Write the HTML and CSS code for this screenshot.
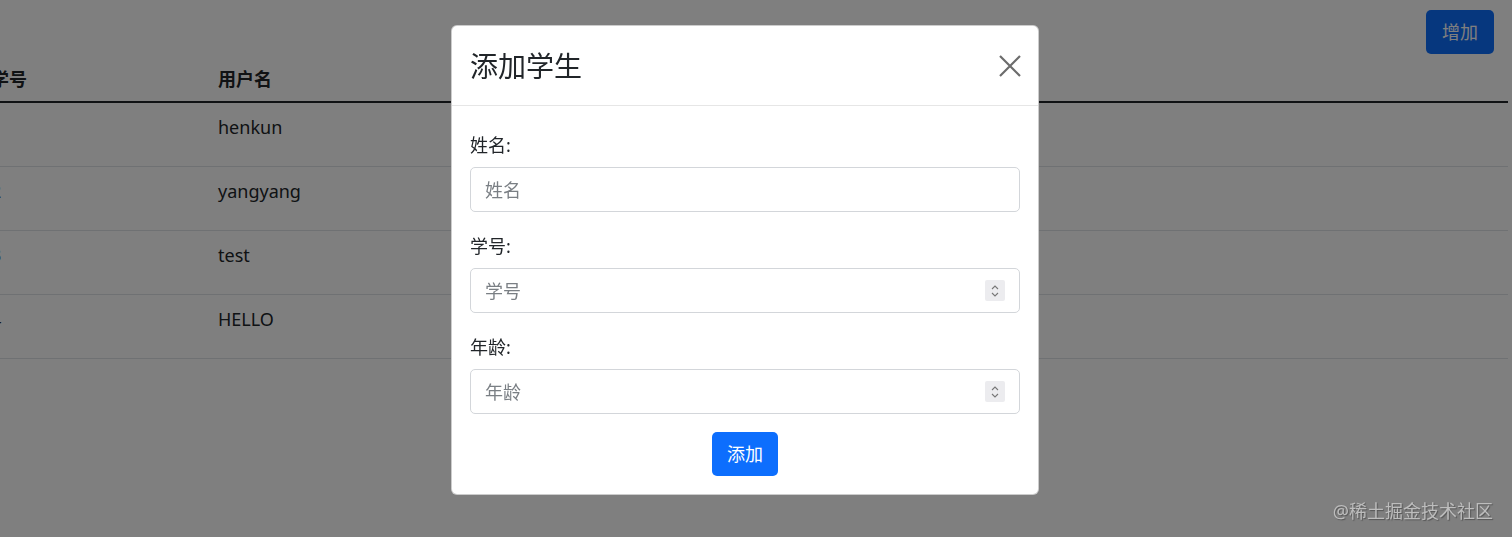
FILE: index.html
```html
<!DOCTYPE html>
<html lang="zh-CN">
<head>
    <meta charset="UTF-8">
    <meta name="viewport" content="width=device-width, initial-scale=1.0">
    <title>学生管理</title>
    <link rel="stylesheet" href="styles.css">
</head>
<body>
    <div class="page">
        <div class="toolbar">
            <button class="btn btn-primary" type="button">增加</button>
        </div>

        <table class="table">
            <thead>
                <tr>
                    <th class="col-id">学号</th>
                    <th>用户名</th>
                </tr>
            </thead>
            <tbody>
                <tr><td class="col-id">1</td><td>henkun</td></tr>
                <tr><td class="col-id">2</td><td>yangyang</td></tr>
                <tr><td class="col-id">3</td><td>test</td></tr>
                <tr><td class="col-id">4</td><td>HELLO</td></tr>
            </tbody>
        </table>
    </div>

    <!-- modal backdrop -->
    <div class="backdrop"></div>

    <div class="modal">
        <div class="modal-dialog">
            <div class="modal-header">
                <h3 class="modal-title">添加学生</h3>
                <button class="btn-close" type="button" aria-label="Close">
                    <svg width="22" height="22" viewBox="0 0 22 22">
                        <path d="M1 1L21 21M21 1L1 21" stroke="#6c6c6c" stroke-width="2.2" fill="none"/>
                    </svg>
                </button>
            </div>
            <form class="modal-body">
                <div class="form-group">
                    <label for="name">姓名:</label>
                    <div class="form-control">
                        <input type="text" id="name" placeholder="姓名">
                    </div>
                </div>
                <div class="form-group">
                    <label for="sno">学号:</label>
                    <div class="form-control">
                        <input type="text" id="sno" placeholder="学号">
                        <span class="spinner">
                            <svg width="10" height="14" viewBox="0 0 10 14">
                                <path d="M2 5L5 2L8 5M2 9L5 12L8 9" stroke="#777" stroke-width="1.1" fill="none"/>
                            </svg>
                        </span>
                    </div>
                </div>
                <div class="form-group">
                    <label for="age">年龄:</label>
                    <div class="form-control">
                        <input type="text" id="age" placeholder="年龄">
                        <span class="spinner">
                            <svg width="10" height="14" viewBox="0 0 10 14">
                                <path d="M2 5L5 2L8 5M2 9L5 12L8 9" stroke="#777" stroke-width="1.1" fill="none"/>
                            </svg>
                        </span>
                    </div>
                </div>
                <div class="form-actions">
                    <button class="btn btn-primary" type="submit">添加</button>
                </div>
            </form>
        </div>
    </div>

    <div class="watermark">@稀土掘金技术社区</div>
</body>
</html>
```

FILE: styles.css
```css
* {
    box-sizing: border-box;
}

body {
    margin: 0;
    background: #fff;
    color: #212529;
    font-family: "Segoe UI", "Noto Sans", "Noto Sans CJK SC", sans-serif;
    font-size: 18px;
    line-height: 1.5;
    overflow: hidden;
}

.page {
    width: 1508px;
}

.toolbar {
    display: flex;
    justify-content: flex-end;
    padding: 10px 14px 0 0;
    height: 58px;
}

.btn {
    border: none;
    border-radius: 5px;
    font-family: inherit;
    font-size: 18px;
    line-height: 1.5;
    padding: 8px 16px;
    height: 44px;
    cursor: pointer;
}

.btn-primary {
    background: #0d6efd;
    color: #fff;
}

.table {
    border-collapse: collapse;
    margin-left: -18px;
    width: 1526px;
}

.table th {
    text-align: left;
    font-weight: 700;
    padding: 8px 9px;
    height: 44px;
    border-bottom: 2px solid #212529;
}

.table td {
    vertical-align: top;
    padding: 11px 9px 0;
    height: 64px;
    border-bottom: 1px solid #dee2e6;
}

.table .col-id {
    width: 227px;
}

.backdrop {
    position: fixed;
    inset: 0;
    background: rgba(0, 0, 0, 0.5);
}

.modal {
    position: fixed;
    inset: 0;
    display: flex;
    justify-content: center;
    align-items: flex-start;
    padding: 25px 22px 0 0;
}

.modal-dialog {
    width: 588px;
    background: #fff;
    border: 1px solid rgba(0, 0, 0, 0.2);
    border-radius: 6px;
}

.modal-header {
    display: flex;
    align-items: center;
    justify-content: space-between;
    height: 80px;
    padding: 0 17px 0 18px;
    border-bottom: 1px solid #e6e6e6;
}

.modal-title {
    margin: 0;
    font-size: 28px;
    font-weight: 400;
    color: #212529;
}

.btn-close {
    display: flex;
    background: none;
    border: none;
    padding: 0;
    cursor: pointer;
}

.modal-body {
    padding: 26px 18px 18px;
}

.form-group {
    margin-bottom: 21px;
}

.form-group label {
    display: block;
    height: 27px;
    margin-bottom: 8px;
}

.form-control {
    display: flex;
    align-items: center;
    height: 45px;
    border: 1px solid #d3d6da;
    border-radius: 5px;
    padding: 0 14px;
}

.form-control input {
    flex: 1;
    border: none;
    outline: none;
    padding: 0;
    font-family: inherit;
    font-size: 18px;
    color: #212529;
    background: transparent;
}

.form-control input::placeholder {
    color: #7a7f84;
}

.spinner {
    display: flex;
    align-items: center;
    justify-content: center;
    width: 20px;
    height: 21px;
    background: #ececef;
    border-radius: 2px;
}

.form-actions {
    display: flex;
    justify-content: center;
    margin-top: -3px;
}

.form-actions .btn {
    padding: 8px 15px;
}

.watermark {
    position: fixed;
    right: 19px;
    bottom: 12px;
    font-size: 18px;
    color: #bdbdbd;
    text-shadow: 1px 1px 1px #555;
}
```
